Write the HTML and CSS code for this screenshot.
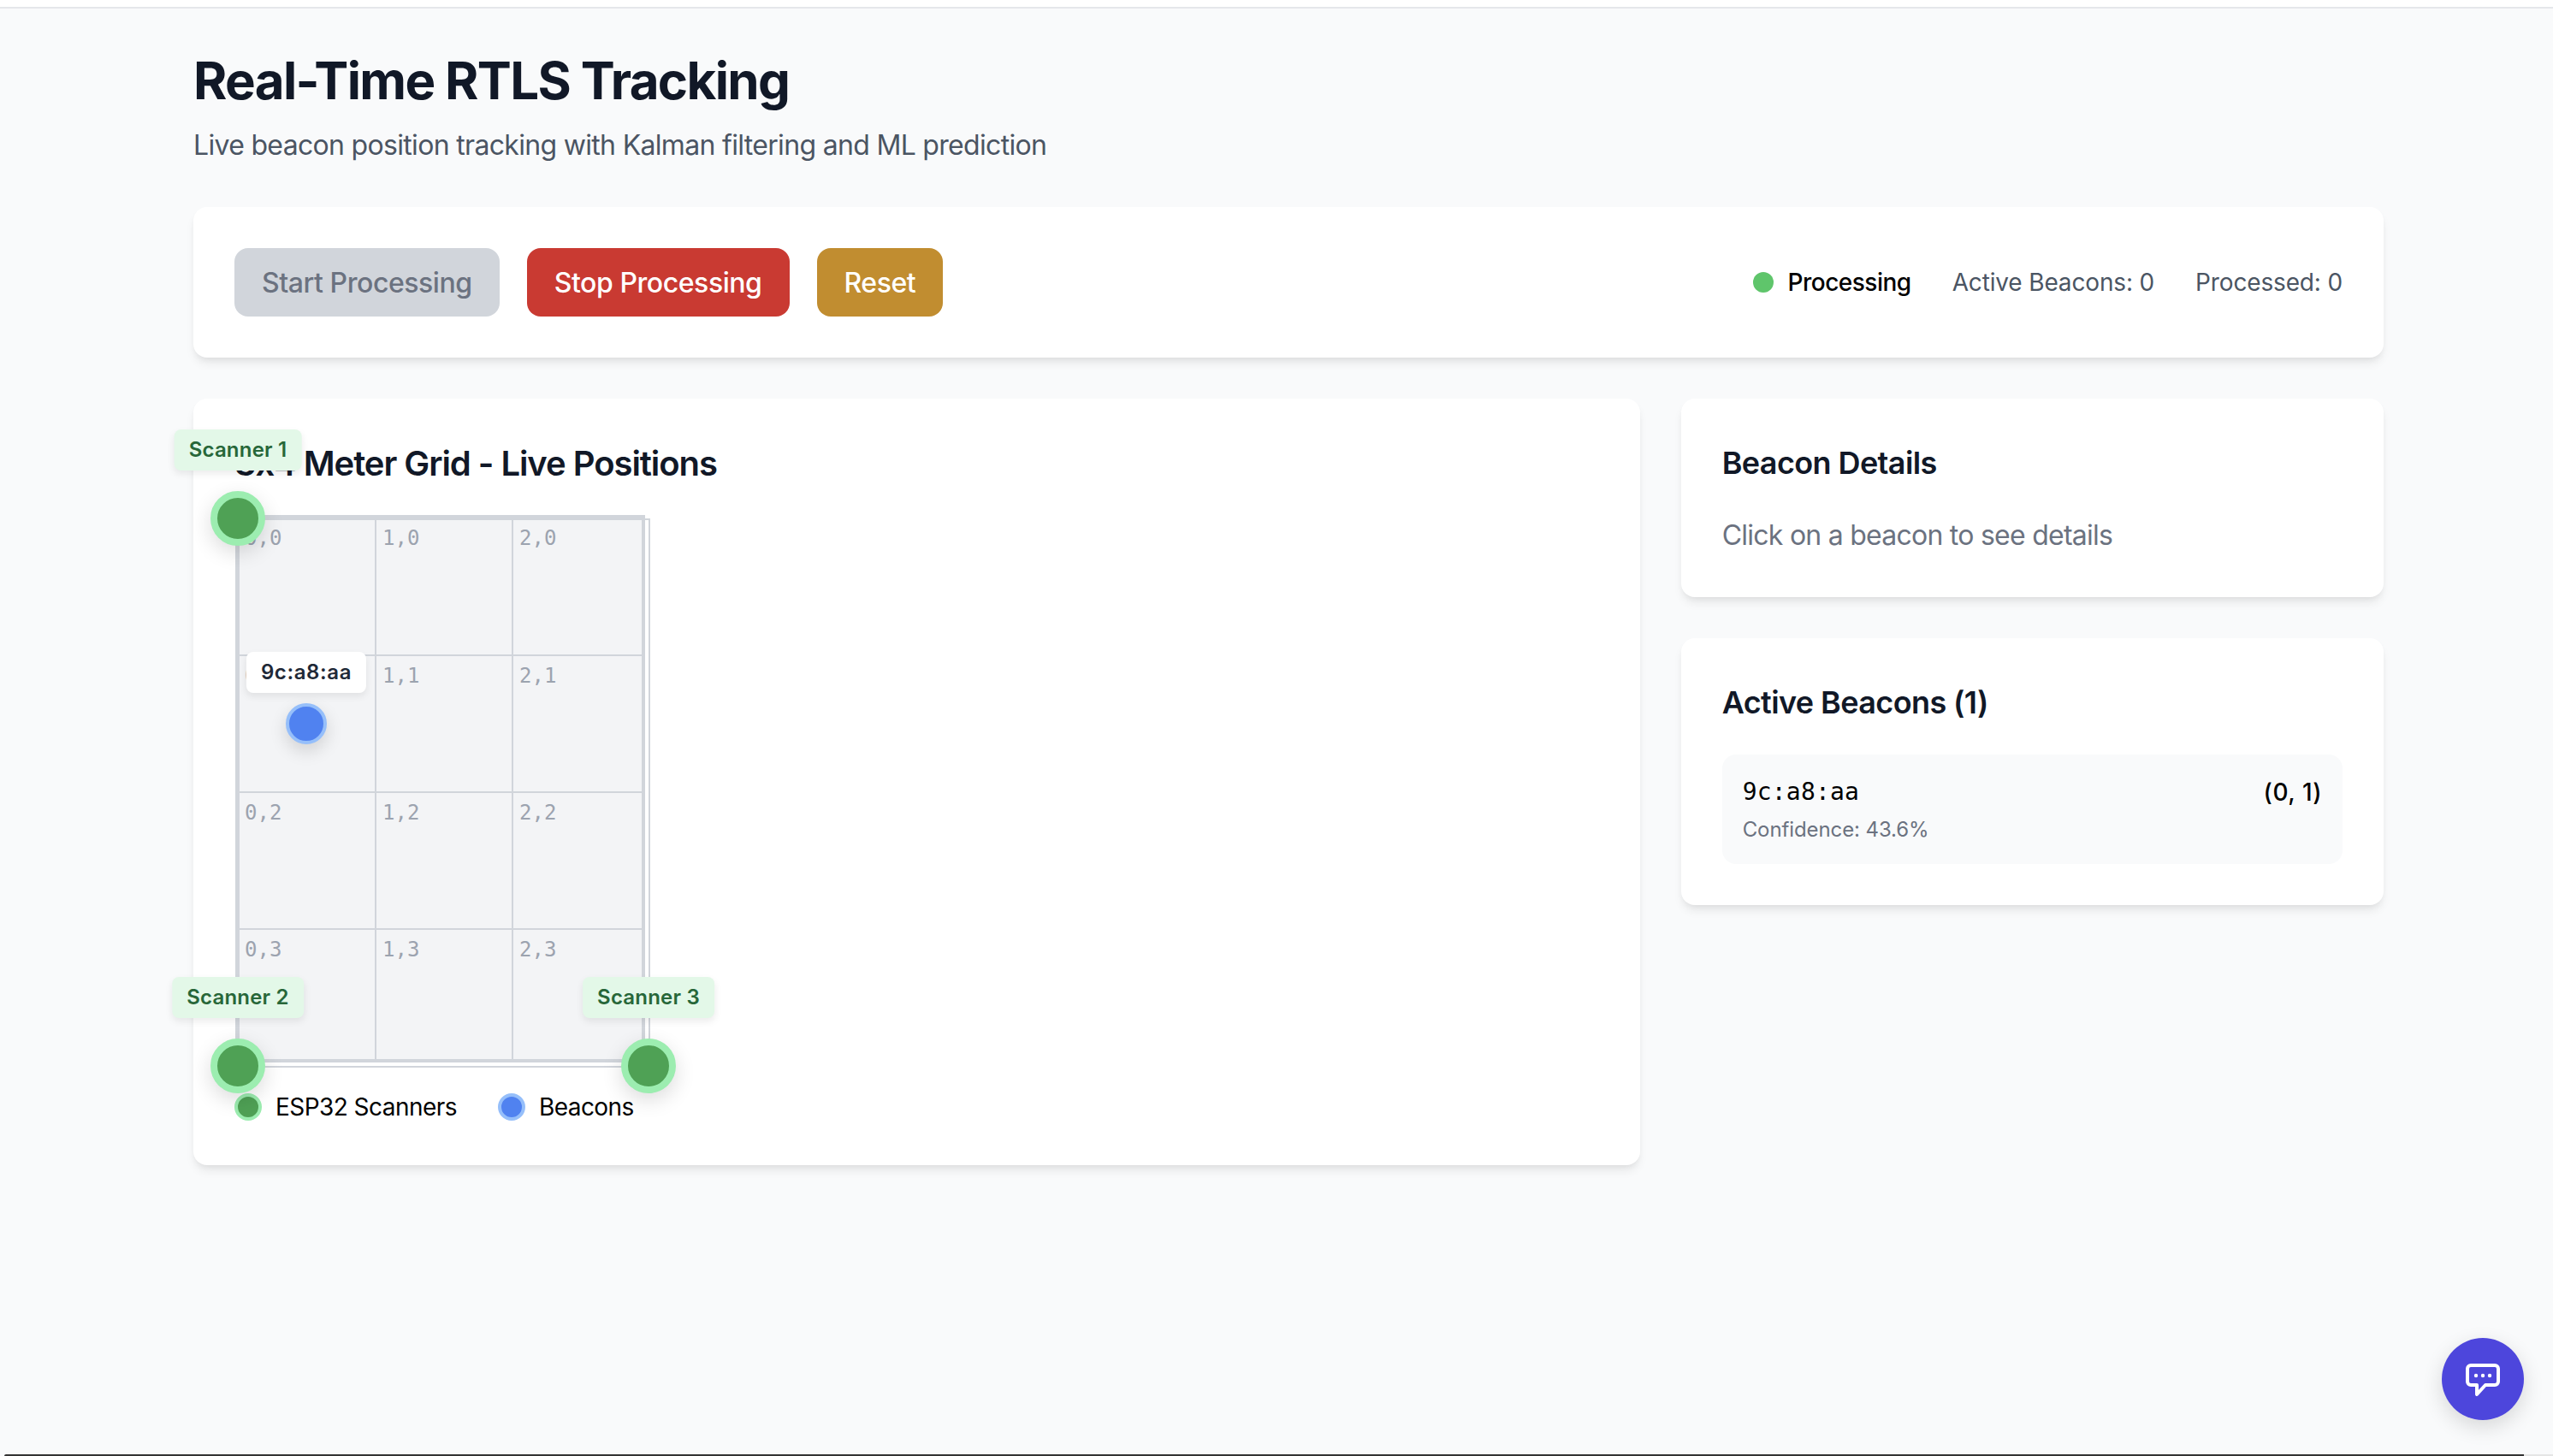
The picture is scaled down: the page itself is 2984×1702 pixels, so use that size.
FILE: index.html
```
<!DOCTYPE html>
<html lang="en">
<head>
<meta charset="UTF-8">
<title>Real-Time RTLS Tracking</title>
<link rel="stylesheet" href="styles.css">
</head>
<body>
<div class="topbar"></div>
<main class="page">
  <h1>Real-Time RTLS Tracking</h1>
  <p class="subtitle">Live beacon position tracking with Kalman filtering and ML prediction</p>

  <section class="card controls">
    <div class="buttons">
      <button class="btn btn-off">Start Processing</button>
      <button class="btn btn-stop">Stop Processing</button>
      <button class="btn btn-reset">Reset</button>
    </div>
    <div class="status">
      <span class="status-live"><i class="status-dot"></i>Processing</span>
      <span>Active Beacons: 0</span>
      <span>Processed: 0</span>
    </div>
  </section>

  <div class="columns">
    <section class="card grid-card">
      <h2>3x4 Meter Grid - Live Positions</h2>
      <div class="map">
        <div class="cells">
          <div class="cell">0,0</div><div class="cell">1,0</div><div class="cell">2,0</div>
          <div class="cell">0,1</div><div class="cell">1,1</div><div class="cell">2,1</div>
          <div class="cell">0,2</div><div class="cell">1,2</div><div class="cell">2,2</div>
          <div class="cell">0,3</div><div class="cell">1,3</div><div class="cell">2,3</div>
        </div>
        <div class="ring"></div>
        <div class="marker pos-tl"><span class="tag">Scanner 1</span><i class="dot-scanner"></i></div>
        <div class="marker pos-bl"><span class="tag">Scanner 2</span><i class="dot-scanner"></i></div>
        <div class="marker pos-br"><span class="tag">Scanner 3</span><i class="dot-scanner"></i></div>
        <div class="marker pos-beacon"><span class="tag tag-beacon">9c:a8:aa</span><i class="dot-beacon"></i></div>
      </div>
      <div class="legend">
        <span class="legend-item"><i class="key key-scanner"></i>ESP32 Scanners</span>
        <span class="legend-item"><i class="key key-beacon"></i>Beacons</span>
      </div>
    </section>

    <aside class="side">
      <section class="card">
        <h2>Beacon Details</h2>
        <p class="hint">Click on a beacon to see details</p>
      </section>
      <section class="card">
        <h2>Active Beacons (1)</h2>
        <div class="beacon-row">
          <div class="beacon-top"><span class="mono">9c:a8:aa</span><span class="coords">(0, 1)</span></div>
          <div class="confidence">Confidence: 43.6%</div>
        </div>
      </section>
    </aside>
  </div>
</main>
<div class="bottombar"></div>
<button class="chat" aria-label="Chat">
  <svg width="48" height="48" viewBox="0 0 48 48" fill="none" stroke="#fff" stroke-width="4" stroke-linejoin="round" stroke-linecap="round">
    <path d="M10 8H38a4 4 0 0 1 4 4V27a4 4 0 0 1-4 4H27L17 42V31H10a4 4 0 0 1-4-4V12a4 4 0 0 1 4-4Z"/>
    <circle cx="16" cy="20" r="2.2" fill="#fff" stroke="none"/>
    <circle cx="24" cy="20" r="2.2" fill="#fff" stroke="none"/>
    <circle cx="32" cy="20" r="2.2" fill="#fff" stroke="none"/>
  </svg>
</button>
</body>
</html>
```
FILE: styles.css
```
* {box-sizing: border-box;}
html, body {height: 100%;}
body {margin: 0; display: flex; flex-direction: column; background: #f9fafb; color: #111827; font-family: Inter, "Liberation Sans", sans-serif;}
i {display: block;}

.topbar {height: 10px; flex: none; background: #fff; border-bottom: 2px solid #e5e7eb;}
.bottombar {height: 2px; flex: none; margin-left: 5px; border-radius: 2px 0 0 0; background: linear-gradient(to right, #333 2945px, #e5e5e5 2945px);}

.page {flex: 1; width: 2560px; margin-left: 226px; padding-top: 48px;}
h1 {margin: 0 0 16px; font-size: 60px; line-height: 72px; font-weight: 700; letter-spacing: -1.65px;}
.subtitle {margin: 0 0 48px; font-size: 32px; line-height: 48px; color: #4b5563; letter-spacing: -.68px;}

.card {background: #fff; border-radius: 16px; padding: 48px; box-shadow: 0 8px 12px -2px rgba(0,0,0,.08), 0 4px 8px -4px rgba(0,0,0,.08);}
h2 {margin: 0 0 32px; font-size: 40px; line-height: 56px; font-weight: 600; letter-spacing: -1.05px;}
.side h2 {margin-bottom: 34px; font-size: 36px; line-height: 54px; letter-spacing: -.6px;}

.controls {display: flex; justify-content: space-between; align-items: center; margin-bottom: 48px;}
.buttons {display: flex; gap: 32px;}
.btn {height: 80px; padding: 0 32px; border: 0; border-radius: 16px; font: 500 32px Inter, sans-serif; letter-spacing: -.44px; color: #fff;}
.btn-off {background: #d1d5db; color: #6b7280;}
.btn-stop {background: #c93a32;}
.btn-reset {background: #c18d30;}
.status {display: flex; gap: 48px; font-size: 28px; line-height: 40px; color: #4b5563; letter-spacing: -.15px;}
.status-live {display: flex; align-items: center; gap: 16px; color: #000; font-weight: 500; letter-spacing: -.5px;}
.status-dot {width: 24px; height: 24px; border-radius: 50%; background: #5fc56b;}

.columns {display: grid; grid-template-columns: repeat(3, 1fr); gap: 48px;}
.grid-card {grid-column: span 2;}
.side {display: flex; flex-direction: column; gap: 48px; align-items: stretch; align-self: start;}

.map {position: relative; height: 648px; margin: 0 0 24px 1px;}
.cells {display: grid; width: 479px; height: 640px; grid-template-columns: 161px 160px 1fr; grid-template-rows: 161px 160px 160px 1fr; border: 4px solid #d1d5db; background: #f3f4f6;}
.cell {padding: 7px 7px; border-right: 2px solid #d1d5db; border-bottom: 2px solid #d1d5db; font: 24px/32px "DejaVu Sans Mono", monospace; color: #9ca3af;}
.cell:nth-child(3n) {border-right: 0;}
.cell:nth-child(n+10) {border-bottom: 0;}
.ring {position: absolute; left: 3px; top: 4px; width: 482px; height: 642px; border: 2px solid #d1d5db;}

.marker {position: absolute; width: 0; height: 0;}
.pos-tl {left: 3px; top: 4px;}
.pos-bl {left: 3px; top: 644px;}
.pos-br {left: 483px; top: 644px;}
.pos-beacon {left: 83px; top: 244px;}
.tag {position: absolute; left: 0; bottom: 56px; transform: translateX(-50%); padding: 0 17px; border-radius: 8px; background: #e3f8e8; box-shadow: 0 4px 8px rgba(0,0,0,.08); color: #276739; font-size: 24px; line-height: 48px; font-weight: 600; letter-spacing: .2px; white-space: nowrap;}
.tag-beacon {bottom: 36px; background: #fff; color: #1f2937; letter-spacing: .6px;}
.dot-scanner {position: absolute; left: -32px; top: -32px; width: 64px; height: 64px; border: 8px solid #9cedb0; border-radius: 50%; background: #4fa155; box-shadow: 0 8px 24px rgba(0,0,0,.14);}
.dot-beacon {position: absolute; left: -24px; top: -24px; width: 48px; height: 48px; border: 4px solid #96bffa; border-radius: 50%; background: #5082f0; box-shadow: 0 8px 20px rgba(0,0,0,.14);}

.legend {display: flex; gap: 48px; font-size: 28px; line-height: 40px; color: #000; letter-spacing: -.55px;}
.legend-item {display: flex; align-items: center; gap: 16px;}
.key {width: 32px; height: 32px; border: 4px solid; border-radius: 50%;}
.key-scanner {border-color: #9cedb0; background: #4fa155;}
.key-beacon {border-color: #96bffa; background: #5082f0;}

.hint {margin: 0; font-size: 32px; line-height: 48px; color: #6b7280; letter-spacing: -.75px;}
.beacon-row {padding: 24px; border-radius: 16px; background: #f9fafb;}
.beacon-top {display: flex; justify-content: space-between; font-size: 28px; line-height: 40px; color: #000;}
.mono {font-family: "DejaVu Sans Mono", monospace; letter-spacing: .2px;}
.coords {font-weight: 500; letter-spacing: .5px;}
.confidence {margin-top: 8px; font-size: 24px; line-height: 32px; color: #6b7280; letter-spacing: -.1px;}

.chat {position: fixed; right: 34px; bottom: 42px; display: flex; align-items: center; justify-content: center; width: 96px; height: 96px; padding: 0; border: 0; border-radius: 50%; background: #4d46dc; box-shadow: 0 8px 24px rgba(0,0,0,.14);}
```
